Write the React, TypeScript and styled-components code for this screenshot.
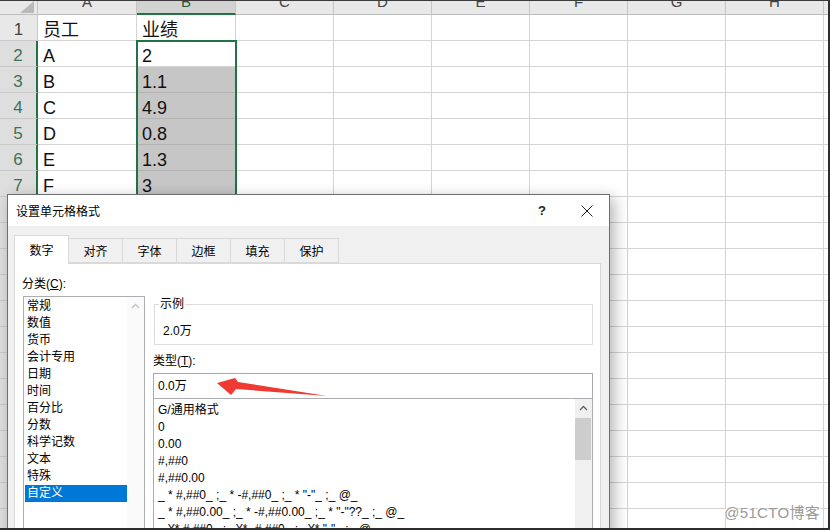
import React from "react";
import styled, { createGlobalStyle } from "styled-components";

const SANS = `"Liberation Sans", "Noto Sans CJK SC", sans-serif`;
const UI = `"Liberation Sans", "Noto Sans CJK SC", sans-serif`;
const GREEN = "#217346";

const Global = createGlobalStyle`
  html, body { margin: 0; padding: 0; background: #fff; }
  body { width: 830px; height: 530px; overflow: hidden; }
  * { box-sizing: border-box; }
`;

const Frame = styled.div`
  position: relative;
  width: 830px;
  height: 530px;
  overflow: hidden;
  border-top: 1px solid #3a3a3a;
  border-right: 2px solid #2e2e2e;
  border-bottom: 2px solid #2e2e2e;
  background: #fff;
  font-family: ${SANS};
`;

const Sheet = styled.div`
  display: flex;
  flex-direction: column;
`;

const HeaderRow = styled.div`
  display: flex;
  height: 14px;
  flex: 0 0 14px;
`;

const Corner = styled.div`
  flex: 0 0 38px;
  height: 14px;
  background: #e8e8e8;
  border-right: 1px solid #c6c6c6;
  border-bottom: 1px solid #bdbdbd;
  display: flex;
  justify-content: flex-end;
  align-items: flex-end;
  padding: 0 3px 1px 0;
`;

const ColHead = styled.div<{ $w: number; $sel?: boolean }>`
  flex: 0 0 ${(p) => p.$w}px;
  height: 14px;
  overflow: hidden;
  background: ${(p) => (p.$sel ? "#d2d2d2" : "#e8e8e8")};
  border-right: 1px solid #c6c6c6;
  border-bottom: ${(p) => (p.$sel ? `2px solid ${GREEN}` : "1px solid #bdbdbd")};
  color: ${(p) => (p.$sel ? "#1f5c3a" : "#444")};
  text-align: center;
  font-size: 15px;
  line-height: 16px;
`;

const ColLabel = styled.span`
  display: block;
  margin-top: -7px;
`;

const Row = styled.div`
  display: flex;
  height: 26px;
  flex: 0 0 26px;
`;

const RowHead = styled.div<{ $sel?: boolean }>`
  flex: 0 0 38px;
  height: 26px;
  background: ${(p) => (p.$sel ? "#dedede" : "#e8e8e8")};
  border-bottom: 1px solid #c9c9c9;
  border-right: ${(p) => (p.$sel ? `2px solid ${GREEN}` : "1px solid #c6c6c6")};
  color: ${(p) => (p.$sel ? "#3d7256" : "#444")};
  text-align: center;
  font-size: 17px;
  line-height: 20px;
  padding-top: 5px;
`;

const Cell = styled.div<{ $w: number; $shade?: boolean }>`
  flex: 0 0 ${(p) => p.$w}px;
  height: 26px;
  background: ${(p) => (p.$shade ? "#c6c6c6" : "#fff")};
  border-right: 1px solid ${(p) => (p.$shade ? "#b9b9b9" : "#d4d4d4")};
  border-bottom: 1px solid ${(p) => (p.$shade ? "#b4b4b4" : "#d4d4d4")};
  padding: 5px 0 0 5px;
  font-size: 18px;
  line-height: 20px;
  color: #111;
  white-space: nowrap;
  overflow: hidden;
`;

const Selection = styled.div`
  position: absolute;
  left: 136px;
  top: 39px;
  width: 101px;
  height: 520px;
  border: 2px solid ${GREEN};
  pointer-events: none;
`;

/* ---------- Dialog ---------- */

const Dialog = styled.div`
  position: absolute;
  left: 7px;
  top: 193px;
  width: 603px;
  height: 360px;
  border: 1px solid #6f6f6f;
  background: #f0f0f0;
  box-shadow: 4px 4px 14px rgba(0, 0, 0, 0.3);
  display: flex;
  flex-direction: column;
  font-family: ${UI};
  font-size: 12px;
  color: #000;
`;

const TitleBar = styled.div`
  height: 31px;
  flex: 0 0 31px;
  background: #fff;
  display: flex;
  align-items: center;
  padding-left: 8px;
`;

const Title = styled.span`
  flex: 1;
  font-size: 12px;
`;

const TitleButton = styled.div<{ $w: number }>`
  width: ${(p) => p.$w}px;
  height: 31px;
  display: flex;
  align-items: center;
  justify-content: center;
  font-size: 13px;
  font-weight: bold;
  color: #222;
`;

const Body = styled.div`
  flex: 1;
  display: flex;
  flex-direction: column;
  padding: 9px 0 0 6px;
`;

const TabRow = styled.div`
  display: flex;
  align-items: flex-end;
  height: 28px;
  position: relative;
  z-index: 1;
`;

const Tab = styled.div<{ $active?: boolean }>`
  width: 55px;
  height: ${(p) => (p.$active ? 29 : 25)}px;
  margin-bottom: ${(p) => (p.$active ? -1 : 0)}px;
  margin-right: -1px;
  background: ${(p) => (p.$active ? "#fff" : "#f0f0f0")};
  border: 1px solid #d9d9d9;
  border-bottom: ${(p) => (p.$active ? "none" : "1px solid #d9d9d9")};
  display: flex;
  align-items: center;
  justify-content: center;
  padding-bottom: ${(p) => (p.$active ? 2 : 0)}px;
`;

const Panel = styled.div`
  width: 587px;
  flex: 1;
  background: #fff;
  border: 1px solid #d9d9d9;
  display: flex;
  gap: 8px;
  padding: 12px 6px 0 7px;
`;

const LeftCol = styled.div`
  width: 123px;
  display: flex;
  flex-direction: column;
`;

const RightCol = styled.div`
  width: 440px;
  display: flex;
  flex-direction: column;
`;

const Label = styled.div`
  line-height: 16px;
  height: 16px;
  white-space: nowrap;
`;

const ListBox = styled.div<{ $h: number }>`
  display: flex;
  height: ${(p) => p.$h}px;
  border: 1px solid #abadb3;
  background: #fff;
`;

const CatList = styled(ListBox)`
  margin: 4px 0 0 1px;
  width: 122px;
`;

const Items = styled.div<{ $pt: number }>`
  flex: 1;
  padding-top: ${(p) => p.$pt}px;
  overflow: hidden;
`;

const CatItem = styled.div<{ $sel?: boolean }>`
  height: 17px;
  line-height: 17px;
  margin-left: 1px;
  padding-left: 2px;
  background: ${(p) => (p.$sel ? "#0078d7" : "transparent")};
  color: ${(p) => (p.$sel ? "#fff" : "#000")};
  white-space: nowrap;
`;

const FmtItem = styled.div`
  height: 17px;
  line-height: 17px;
  padding-left: 4px;
  white-space: nowrap;
`;

const ScrollBar = styled.div<{ $bg: string }>`
  width: 17px;
  flex: 0 0 17px;
  background: ${(p) => p.$bg};
  display: flex;
  flex-direction: column;
`;

const ArrowBtn = styled.div`
  height: 17px;
  display: flex;
  align-items: center;
  justify-content: center;
`;

const Thumb = styled.div`
  margin: 2px 1px 0 0;
  height: 42px;
  background: #cdcdcd;
`;

const Group = styled.fieldset`
  margin: 20px 0 0 1px;
  width: 439px;
  border: 1px solid #dcdcdc;
  padding: 11px 4px 5px 4px;
  min-width: 0;
`;

const Legend = styled.legend`
  padding: 0 1px;
  line-height: 16px;
  font-size: 12px;
`;

const Sample = styled.div`
  line-height: 16px;
  margin-left: 4px;
`;

const TypeLabel = styled(Label)`
  margin-top: 8px;
`;

const TypeInput = styled.div`
  margin-top: 4px;
  height: 26px;
  width: 440px;
  border: 1px solid #a9a9a9;
  padding-left: 4px;
  line-height: 24px;
  background: #fff;
`;

const FmtList = styled(ListBox)`
  margin-top: -1px;
  width: 440px;
`;

const Arrow = styled.svg`
  position: absolute;
  left: 210px;
  top: 370px;
  width: 125px;
  height: 30px;
  pointer-events: none;
`;

const Watermark = styled.div`
  position: absolute;
  right: 8px;
  bottom: 6px;
  font-family: ${SANS};
  font-size: 15px;
  color: #9a9a9a;
  text-shadow: 1px 1px 0 #fff, -1px -1px 0 #fff;
  letter-spacing: 0.3px;
`;

const cols = [
  { l: "A", w: 99 },
  { l: "B", w: 99 },
  { l: "C", w: 98 },
  { l: "D", w: 98 },
  { l: "E", w: 98 },
  { l: "F", w: 98 },
  { l: "G", w: 98 },
  { l: "H", w: 98 },
  { l: "I", w: 60 },
];

const data: string[][] = [
  ["员工", "业绩"],
  ["A", "2"],
  ["B", "1.1"],
  ["C", "4.9"],
  ["D", "0.8"],
  ["E", "1.3"],
  ["F", "3"],
];

const tabs = ["数字", "对齐", "字体", "边框", "填充", "保护"];
const cats = ["常规", "数值", "货币", "会计专用", "日期", "时间", "百分比", "分数", "科学记数", "文本", "特殊", "自定义"];
const fmts = [
  "G/通用格式",
  "0",
  "0.00",
  "#,##0",
  "#,##0.00",
  '_ * #,##0_ ;_ * -#,##0_ ;_ * "-"_ ;_ @_',
  '_ * #,##0.00_ ;_ * -#,##0.00_ ;_ * "-"??_ ;_ @_',
  '_ ¥* #,##0_ ;_ ¥* -#,##0_ ;_ ¥* "-"_ ;_ @_',
  '_ ¥* #,##0.00_ ;_ ¥* -#,##0.00_ ;_ ¥* "-"??_ ;_ @_',
];

const Chevron = ({ color }: { color: string }) => (
  <svg width="9" height="6" viewBox="0 0 9 6">
    <path d="M1 5 L4.5 1.5 L8 5" fill="none" stroke={color} strokeWidth="1.3" />
  </svg>
);

export default function App() {
  const rows = Array.from({ length: 7 }, (_, i) => i + 1);
  const hiddenRows = Array.from({ length: 13 }, (_, i) => i + 8);
  return (
    <>
      <Global />
      <Frame>
        <Sheet>
          <HeaderRow>
            <Corner>
              <svg width="14" height="12" viewBox="0 0 14 12">
                <polygon points="14,0 14,12 0,12" fill="#b9b9b9" />
              </svg>
            </Corner>
            {cols.map((c, i) => (
              <ColHead key={c.l} $w={c.w} $sel={i === 1}>
                <ColLabel>{c.l}</ColLabel>
              </ColHead>
            ))}
          </HeaderRow>
          {rows.map((r) => (
            <Row key={r}>
              <RowHead $sel={r >= 2}>{r}</RowHead>
              {cols.map((c, ci) => (
                <Cell key={c.l} $w={c.w} $shade={ci === 1 && r >= 3}>
                  {data[r - 1] && ci < 2 ? data[r - 1][ci] : ""}
                </Cell>
              ))}
            </Row>
          ))}
          {hiddenRows.map((r) => (
            <Row key={r}>
              <RowHead $sel />
              {cols.map((c, ci) => (
                <Cell key={c.l} $w={c.w} $shade={ci === 1} />
              ))}
            </Row>
          ))}
        </Sheet>
        <Selection />

        <Dialog>
          <TitleBar>
            <Title>设置单元格格式</Title>
            <TitleButton $w={46}>?</TitleButton>
            <TitleButton $w={44}>
              <svg width="12" height="12" viewBox="0 0 12 12">
                <path d="M0.5 0.5 L11.5 11.5 M11.5 0.5 L0.5 11.5" stroke="#222" strokeWidth="1" />
              </svg>
            </TitleButton>
          </TitleBar>
          <Body>
            <TabRow>
              {tabs.map((t, i) => (
                <Tab key={t} $active={i === 0}>
                  {t}
                </Tab>
              ))}
            </TabRow>
            <Panel>
              <LeftCol>
                <Label>
                  分类(<u>C</u>):
                </Label>
                <CatList $h={250}>
                  <Items $pt={1}>
                    {cats.map((c, i) => (
                      <CatItem key={c} $sel={i === cats.length - 1}>
                        {c}
                      </CatItem>
                    ))}
                  </Items>
                  <ScrollBar $bg="#fafafa">
                    <ArrowBtn>
                      <Chevron color="#c2c2c2" />
                    </ArrowBtn>
                  </ScrollBar>
                </CatList>
              </LeftCol>
              <RightCol>
                <Group>
                  <Legend>示例</Legend>
                  <Sample>2.0万</Sample>
                </Group>
                <TypeLabel>
                  类型(<u>T</u>):
                </TypeLabel>
                <TypeInput>0.0万</TypeInput>
                <FmtList $h={160}>
                  <Items $pt={3}>
                    {fmts.map((f) => (
                      <FmtItem key={f}>{f}</FmtItem>
                    ))}
                  </Items>
                  <ScrollBar $bg="#f0f0f0">
                    <ArrowBtn>
                      <Chevron color="#606060" />
                    </ArrowBtn>
                    <Thumb />
                  </ScrollBar>
                </FmtList>
              </RightCol>
            </Panel>
          </Body>
        </Dialog>

        <Arrow viewBox="0 0 125 30">
          <polygon points="7,12 25,7 28,11 117,25 26,18 21,24" fill="#ee3a33" />
        </Arrow>

        <Watermark>@51CTO博客</Watermark>
      </Frame>
    </>
  );
}
